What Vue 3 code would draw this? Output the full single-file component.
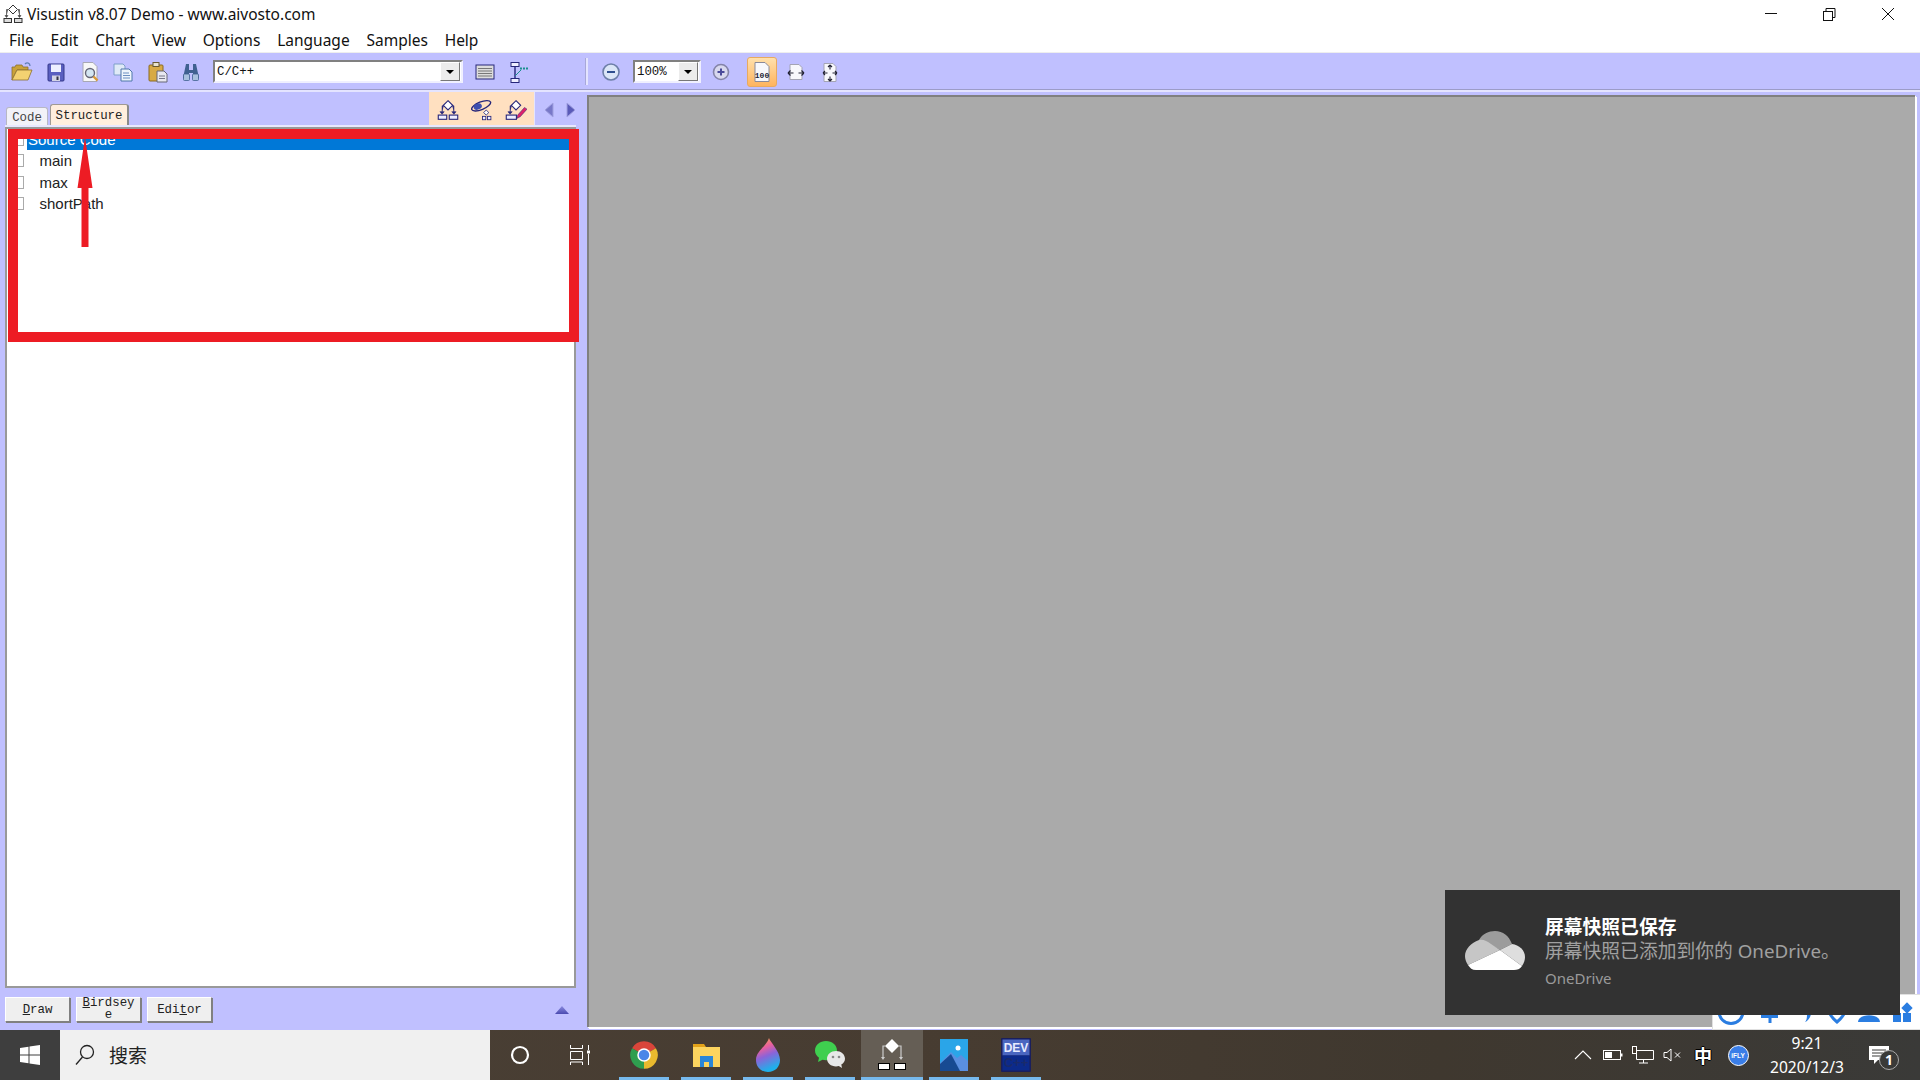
<template>
  <div class="screen">
    <!-- title bar -->
    <div class="titlebar">
      <svg class="app-icon" width="20" height="20" viewBox="0 0 20 20">
        <path d="M10 1l4.500 4.500-4.500 4.500-4.500-4.500z" fill="#fff" stroke="#333" />
        <path d="M5 5.500H3.500v7M15 5.500h1.500v7M2 11.500h3l-1.500 2zM15 11.500h3l-1.500 2z" stroke="#444" fill="#444" stroke-width=".6" />
        <rect x="1" y="14.500" width="7.500" height="4" fill="#ddd" stroke="#333" />
        <rect x="11.500" y="14.500" width="7.500" height="4" fill="#ddd" stroke="#333" />
      </svg>
      <span class="title-text">Visustin v8.07 Demo - www.aivosto.com</span>
      <div class="win-controls">
        <svg width="58" height="27" viewBox="0 0 58 27"><path d="M23 13.500h12" stroke="#111" /></svg>
        <svg width="58" height="27" viewBox="0 0 58 27">
          <rect x="23.500" y="11.500" width="9" height="9" fill="#fff" stroke="#111" />
          <path d="M26 11V8.500h9v9h-2.500" fill="none" stroke="#111" />
        </svg>
        <svg width="60" height="27" viewBox="0 0 60 27"><path d="M24 8l12 12M36 8L24 20" stroke="#111" /></svg>
      </div>
    </div>

    <!-- menu -->
    <div class="menubar">
      <span v-for="m in menus" :key="m" class="menu-item">{{ m }}</span>
    </div>

    <!-- toolbar -->
    <div class="toolbar">
      <span class="tool">
        <svg width="24" height="24" viewBox="0 0 24 24">
          <path d="M2 20V7h3l1-2h6l1 2h5v3H7L2 20z" fill="#c9a23a" stroke="#8a7030" stroke-width=".8" />
          <path d="M2 20l5-10h15l-4 10z" fill="#f3d271" stroke="#8a7030" stroke-width=".8" />
          <path d="M15 4c2-2 5-1 5 2" fill="none" stroke="#5f7fb5" stroke-width="1.300" />
        </svg>
      </span>
      <span class="tool">
        <svg width="24" height="24" viewBox="0 0 24 24">
          <rect x="4" y="4" width="16" height="17" rx="1" fill="#5a5fc0" stroke="#34388a" />
          <rect x="7" y="4.500" width="10" height="7.500" fill="#eef0ff" />
          <rect x="8" y="15.500" width="8" height="5.500" fill="#d4d4e4" />
          <rect x="12.500" y="16.500" width="2" height="3.500" fill="#334" />
        </svg>
      </span>
      <span class="tool">
        <svg width="24" height="24" viewBox="0 0 24 24">
          <path d="M5 2.500h10l4 4v15H5z" fill="#f7f7f7" stroke="#a8a8b4" />
          <circle cx="12" cy="13" r="4.500" fill="#d4e6f2" stroke="#667" stroke-width="1.400" />
          <path d="M15.500 16.500l4 4" stroke="#d99a3a" stroke-width="2.400" />
        </svg>
      </span>
      <span class="tool">
        <svg width="24" height="24" viewBox="0 0 24 24" class="nudge-left">
          <path d="M3 4h9l2 2v9H3z" fill="#dfeaf7" stroke="#7f9fc9" />
          <path d="M10 9h8l3 3v9H10z" fill="#eef5fc" stroke="#4f77aa" />
          <path d="M12 13h6M12 15.500h7M12 18h7" stroke="#6c8fc0" />
        </svg>
      </span>
      <span class="tool">
        <svg width="24" height="24" viewBox="0 0 24 24">
          <rect x="3" y="5" width="14" height="16" rx="1" fill="#d8aa45" stroke="#8a6a20" />
          <rect x="7" y="2.500" width="6" height="4" fill="#e9e4cf" stroke="#6a5a30" />
          <path d="M11 11h7l3 3v8H11z" fill="#e8e8f0" stroke="#667" />
          <path d="M13 16h6M13 18.500h6" stroke="#778" />
        </svg>
      </span>
      <span class="tool">
        <svg width="24" height="24" viewBox="0 0 24 24" class="nudge-left">
          <path d="M7 4h3v6h4V4h3l3 14h-6v-5h-4v5H4z" fill="#3f6090" />
          <rect x="4.500" y="14" width="6" height="6.500" rx="1" fill="#a8c0de" stroke="#3f6090" stroke-width=".8" />
          <rect x="13.500" y="14" width="6" height="6.500" rx="1" fill="#a8c0de" stroke="#3f6090" stroke-width=".8" />
        </svg>
      </span>

      <div class="combo lang-combo">
        <span class="combo-text">C/C++</span>
        <span class="combo-btn"><i class="caret"></i></span>
      </div>

      <span class="tool after-combo">
        <svg width="24" height="24" viewBox="0 0 24 24">
          <rect x="3" y="5" width="18" height="14" fill="#dcdcdc" stroke="#26267a" />
          <path d="M5 8.500h14M5 11h14M5 13.500h14M5 16h14" stroke="#777" />
        </svg>
      </span>
      <span class="tool">
        <svg width="24" height="24" viewBox="0 0 24 24">
          <rect x="4" y="2.500" width="8" height="4" fill="#eef" stroke="#26267a" />
          <rect x="4" y="18.500" width="8" height="4" fill="#eef" stroke="#26267a" />
          <path d="M8 6.500v12" stroke="#26267a" stroke-width="1.400" />
          <path d="M8 16l6-6" stroke="#1a8f8f" />
          <path d="M13 7.500h2v2h-2zM16 7.500h2v2h-2zM19 7.500h2v2h-2z" fill="#1a8f8f" />
        </svg>
      </span>

      <span class="tool-sep"></span>

      <span class="tool zoom-out">
        <svg width="24" height="24" viewBox="0 0 24 24">
          <circle cx="12" cy="12" r="8" fill="#dbe6f7" stroke="#6d7fa8" stroke-width="1.600" />
          <path d="M8 12h8" stroke="#2f4f8f" stroke-width="2" />
        </svg>
      </span>
      <div class="combo zoom-combo">
        <span class="combo-text">100%</span>
        <span class="combo-btn"><i class="caret"></i></span>
      </div>
      <span class="tool zoom-in">
        <svg width="24" height="24" viewBox="0 0 24 24">
          <circle cx="12" cy="12" r="7.500" fill="#d8d8ee" stroke="#8484a8" stroke-width="1.600" />
          <path d="M8.500 12h7M12 8.500v7" stroke="#4a4a9a" stroke-width="2" />
        </svg>
      </span>
      <span class="tool-active">
        <svg width="24" height="24" viewBox="0 0 24 24">
          <path d="M5 2.500h10l4 4v15H5z" fill="#f8f8fc" stroke="#8a8a9a" />
          <text x="12" y="18" text-anchor="middle" class="icon-label">100</text>
        </svg>
      </span>
      <span class="tool fit-width">
        <svg width="24" height="24" viewBox="0 0 24 24">
          <path d="M6 4.500h9l3 3v12H6z" fill="#f8f8fc" stroke="#a4a4b4" />
          <path d="M4 13h5.500M14.500 13H20M4 13l2.500-2.500M4 13l2.500 2.500M20 13l-2.500-2.500M20 13l-2.500 2.500" stroke="#223" stroke-width="1.200" fill="none" />
        </svg>
      </span>
      <span class="tool">
        <svg width="24" height="24" viewBox="0 0 24 24">
          <path d="M6 3.500h9l3 3v15H6z" fill="#f8f8fc" stroke="#a4a4b4" />
          <path d="M5 13h4.500M14.500 13H19M12 5v4.500M12 16.500V21M5 13l2-2M5 13l2 2M19 13l-2-2M19 13l-2 2M12 5l-2 2M12 5l2 2M12 21l-2-2M12 21l2-2" stroke="#223" stroke-width="1.100" fill="none" />
        </svg>
      </span>
    </div>

    <div class="main">
      <!-- left panel -->
      <div class="left">
        <div class="tabs-row">
          <span class="tab">Code</span>
          <span class="tab current">Structure</span>
          <div class="chart-tools">
            <svg width="22" height="22" viewBox="0 0 26 26">
              <path d="M13 2l5.500 5.500L13 13 7.500 7.500z" fill="#fff" stroke="#26267a" stroke-width="1.300" />
              <path d="M8 8H6v8M18 8h2v8M3.500 15h5L6 18zM17.500 15h5L20 18z" fill="#26267a" stroke="#26267a" stroke-width=".7" />
              <rect x="1.500" y="19" width="10" height="5" fill="#eef" stroke="#26267a" stroke-width="1.300" />
              <rect x="14.500" y="19" width="10" height="5" fill="#eef" stroke="#26267a" stroke-width="1.300" />
            </svg>
            <svg width="22" height="22" viewBox="0 0 26 26">
              <ellipse cx="12" cy="8" rx="12" ry="4.500" fill="none" stroke="#26267a" stroke-width="1.600" transform="rotate(-22 12 8)" />
              <ellipse cx="8" cy="9" rx="5" ry="3.500" fill="#3d4fb0" transform="rotate(-22 8 9)" />
              <path d="M18 13l3 3-3 3-3-3z" fill="#fff" stroke="#26267a" />
              <rect x="13.500" y="20.500" width="4" height="4" fill="#eef" stroke="#26267a" />
              <rect x="19.500" y="20.500" width="4" height="4" fill="#eef" stroke="#26267a" />
            </svg>
            <svg width="22" height="22" viewBox="0 0 26 26">
              <path d="M13 2l5.500 5.500L13 13 7.500 7.500z" fill="#fff" stroke="#26267a" stroke-width="1.300" />
              <path d="M8 8H6v8M3.500 15h5L6 18z" fill="#26267a" stroke="#26267a" stroke-width=".7" />
              <rect x="1.500" y="19" width="12" height="5" fill="#eef" stroke="#26267a" stroke-width="1.300" />
              <path d="M15 19l8-9 3 2-8 9-4 2z" fill="#e0206a" stroke="#26267a" stroke-width=".6" />
            </svg>
          </div>
          <div class="nav-arrows">
            <svg width="10" height="16" viewBox="0 0 10 16"><path d="M9 1L1 8l8 7z" fill="#7878c8" stroke="#a0a0e0" /></svg>
            <svg width="10" height="16" viewBox="0 0 10 16"><path d="M1 1l8 7-8 7z" fill="#5a5ab8" stroke="#a0a0e0" /></svg>
          </div>
        </div>

        <div class="tree">
          <div v-for="row in rows" :key="row.name" class="tree-row">
            <span class="check"></span>
            <span class="tree-label" :class="{ selected: row.selected, child: !row.selected }">{{ row.name }}</span>
          </div>
        </div>

        <div class="bottom-row">
          <button class="mono-btn"><u>D</u>raw</button>
          <button class="mono-btn wrap"><u>B</u>irdseye</button>
          <button class="mono-btn">Edi<u>t</u>or</button>
          <svg class="collapse" width="14" height="8" viewBox="0 0 14 8">
            <defs>
              <linearGradient id="tri" x1="0" y1="0" x2="0" y2="1">
                <stop offset="0" stop-color="#8c8ce0" />
                <stop offset="1" stop-color="#4a4ab0" />
              </linearGradient>
            </defs>
            <path d="M7 0l7 8H0z" fill="url(#tri)" />
          </svg>
        </div>
      </div>

      <!-- chart area -->
      <div class="canvas-wrap">
        <div class="canvas"></div>
      </div>
    </div>

    <!-- taskbar -->
    <div class="taskbar">
      <div class="start">
        <svg width="20" height="20" viewBox="0 0 20 20">
          <path d="M0 3l8.500-1.200v7.700H0zM9.500 1.600L20 0v9.500H9.500zM0 10.500h8.500v7.700L0 17zM9.500 10.500H20V20L9.500 18.400z" fill="#fff" />
        </svg>
      </div>
      <div class="search">
        <svg width="22" height="24" viewBox="0 0 22 24">
          <circle cx="13" cy="9" r="6.500" fill="none" stroke="#222" stroke-width="1.300" />
          <path d="M8.500 14L2 21.500" stroke="#222" stroke-width="1.300" />
        </svg>
        <span class="search-text">搜索</span>
      </div>
      <div class="task-btn cortana">
        <svg width="20" height="20" viewBox="0 0 20 20"><circle cx="10" cy="10" r="8" fill="none" stroke="#fff" stroke-width="2.200" /></svg>
      </div>
      <div class="task-btn view">
        <svg width="22" height="22" viewBox="0 0 22 22">
          <path d="M1.500 1v3.500h12V1M1.500 7.500h12v8h-12zM1.500 21v-3h12v3M19.500 1v5M19.500 10v11" fill="none" stroke="#fff" />
          <rect x="18" y="6.500" width="3" height="3" fill="#fff" />
        </svg>
      </div>

      <div v-for="app in apps" :key="app" class="app-slot" :class="{ active: app === 'visustin' }">
        <svg v-if="app === 'chrome'" width="30" height="32" viewBox="0 0 24 24">
          <path d="M12 12L2.470 6.500A11 11 0 0 1 21.530 6.500z" fill="#d9453a" />
          <path d="M12 12l9.530-5.500A11 11 0 0 1 12 23z" fill="#e9b92e" />
          <path d="M12 12v11A11 11 0 0 1 2.470 6.500z" fill="#2f9e4f" />
          <circle cx="12" cy="12" r="5.400" fill="#fff" />
          <circle cx="12" cy="12" r="4.200" fill="#4a86e8" />
        </svg>
        <svg v-else-if="app === 'folder'" width="30" height="30" viewBox="0 0 30 30">
          <path d="M2 4h11l2 3H2z" fill="#e2a21a" />
          <rect x="2" y="7" width="27" height="20" fill="#fcd45f" />
          <path d="M9 27v-11h13v11h-4v-5h-5v5z" fill="#2a86d8" />
        </svg>
        <svg v-else-if="app === 'flame'" width="26" height="36" viewBox="0 0 26 36">
          <defs>
            <linearGradient id="flame" x1="0" y1="0" x2="0.300" y2="1">
              <stop offset="0" stop-color="#f5b63c" />
              <stop offset=".35" stop-color="#e85f9e" />
              <stop offset=".6" stop-color="#8b63d8" />
              <stop offset="1" stop-color="#1fb0ea" />
            </linearGradient>
          </defs>
          <path d="M14 1c1 4 11 13 11 22 0 7-5 12-12 12S1 30 1 23C1 14 11 10 14 1z" fill="url(#flame)" />
        </svg>
        <svg v-else-if="app === 'wechat'" width="32" height="30" viewBox="0 0 32 30">
          <path d="M12 1C6 1 1 5 1 10.500c0 3 1.500 5.500 4 7.300L4 22l4.500-2.300c1 .3 2.300.5 3.500.5 6 0 11-4.200 11-9.700S18 1 12 1z" fill="#3fcf4f" />
          <path d="M22 11c-5 0-9 3.400-9 7.700s4 7.700 9 7.700c1 0 2-.1 2.800-.4L28 28l-.7-3.400c2.300-1.400 3.700-3.500 3.700-5.900 0-4.300-4-7.700-9-7.700z" fill="#e8e8e8" />
          <circle cx="19" cy="17" r="1.300" fill="#888" />
          <circle cx="25" cy="17" r="1.300" fill="#888" />
        </svg>
        <svg v-else-if="app === 'visustin'" width="30" height="34" viewBox="0 0 30 34">
          <path d="M15 1l7 7-7 7-7-7z" fill="#fff" />
          <path d="M8 8H6v11M22 8h2v11" stroke="#ccc" stroke-width="1.200" fill="none" />
          <path d="M4 19h4l-2 3zM22 19h4l-2 3z" fill="#ccc" />
          <rect x="1.500" y="25.500" width="11" height="6" fill="#fff" stroke="#000" />
          <rect x="17.500" y="25.500" width="11" height="6" fill="#fff" stroke="#000" />
        </svg>
        <svg v-else-if="app === 'photos'" width="28" height="32" viewBox="0 0 28 32">
          <rect width="28" height="32" fill="#2aa5e8" />
          <circle cx="18" cy="9" r="2.500" fill="#fff" />
          <path d="M0 24l11-11 6 6 4-3 7 6v12H0z" fill="#5a8fe0" />
          <path d="M0 25l11-10 9 17H0z" fill="#174a92" />
        </svg>
        <svg v-else-if="app === 'dev'" width="30" height="34" viewBox="0 0 30 34">
          <rect width="30" height="34" rx="1" fill="#1a1f5c" />
          <rect x="1.500" y="1.500" width="27" height="16" fill="#4a66c0" />
          <rect x="1.500" y="17.500" width="27" height="15" fill="#0c2a8a" />
          <text x="15" y="14" text-anchor="middle" class="dev-top">DEV</text>
          <text x="15" y="29" text-anchor="middle" class="dev-bottom">C++</text>
        </svg>
        <span class="underline"></span>
      </div>

      <div class="tray">
        <span class="tray-slot">
          <svg width="18" height="12" viewBox="0 0 18 12"><path d="M1 10l8-8 8 8" fill="none" stroke="#fff" stroke-width="1.100" /></svg>
        </span>
        <span class="tray-slot">
          <svg width="20" height="12" viewBox="0 0 20 12">
            <rect x=".5" y="1.500" width="17" height="9" fill="none" stroke="#fff" />
            <rect x="2" y="3" width="7" height="6" fill="#fff" />
            <rect x="18" y="4.500" width="1.500" height="3" fill="#fff" />
          </svg>
        </span>
        <span class="tray-slot">
          <svg width="22" height="18" viewBox="0 0 22 18">
            <path d="M4.500 4.500h17v9h-17zM7 17h9M11.500 13.500V17" fill="none" stroke="#fff" />
            <rect x=".5" y=".5" width="4" height="7" fill="#3f352b" stroke="#fff" />
          </svg>
        </span>
        <span class="tray-slot">
          <svg width="20" height="14" viewBox="0 0 20 14">
            <path d="M1 4.500h3L8 1v12L4 9.500H1z" fill="none" stroke="#fff" />
            <path d="M12 4.500l5 5M17 4.500l-5 5" stroke="#fff" />
          </svg>
        </span>
        <span class="tray-slot ime">中</span>
        <span class="tray-slot wide">
          <span class="ifly">iFLY</span>
        </span>
        <div class="clock">
          <span>9:21</span>
          <span>2020/12/3</span>
        </div>
        <span class="notify">
          <svg width="20" height="19" viewBox="0 0 20 19">
            <path d="M0 0h20v14H9l-4 4v-4H0z" fill="#fff" />
            <path d="M3 4h14M3 7h14M3 10h9" stroke="#3a3a38" />
          </svg>
          <span class="notify-badge">1</span>
        </span>
      </div>
    </div>

    <!-- red annotation drawn over the tree -->
    <div class="mark-box"></div>
    <svg class="mark-arrow" width="16" height="110" viewBox="0 0 16 110">
      <path d="M8 0L15.500 51H11.500V110H4.500V51H.5z" fill="#ed1c24" />
    </svg>

    <!-- floating input bar behind the toast -->
    <div class="input-bar">
      <svg width="207" height="34" viewBox="0 0 207 34">
        <circle cx="18" cy="16.500" r="12" fill="none" stroke="#2a7de1" stroke-width="3" />
        <path d="M57 5v23M48 21.500h17" stroke="#2a7de1" stroke-width="3" />
        <path d="M98 18c0 4-3 8-6 9 2-2 2-5 2-9z" fill="#2a7de1" />
        <path d="M116 17c2 5 8 10 8 10s6-5 8-10" fill="none" stroke="#2a7de1" stroke-width="3" />
        <path d="M145 27c0-9 22-9 22 0z" fill="#2a7de1" />
        <rect x="180" y="18" width="8" height="9" fill="#2a7de1" />
        <rect x="190" y="18" width="8" height="9" fill="#2a7de1" />
        <rect x="190" y="9" width="8" height="8" fill="#2a7de1" transform="rotate(45 194 13)" />
      </svg>
    </div>

    <!-- toast -->
    <div class="toast">
      <svg class="cloud" width="60" height="39" viewBox="0 0 60 39">
        <path d="M14 9C17 3 24 0 30 0c8 0 14 5 17 13L35 19 24 13c-4-2-7-3-10-4z" fill="#9c9c9c" />
        <path d="M14 9c4-1 8 1 12 4l9 6L3 34c-2-3-3-6-3-9C0 18 6 12 14 9z" fill="#c6c6c6" />
        <path d="M47 13c7 1 13 6 13 13 0 3-1 6-3 9L35 19z" fill="#dedede" />
        <path d="M3 34l32-15 22 16c-2 3-5 4-8 4H11c-4 0-6-2-8-5z" fill="#fff" />
      </svg>
      <div class="toast-text">
        <div class="toast-title">屏幕快照已保存</div>
        <div class="toast-body">屏幕快照已添加到你的 OneDrive。</div>
        <div class="toast-source">OneDrive</div>
      </div>
    </div>
  </div>
</template>

<script setup>
const menus = ['File', 'Edit', 'Chart', 'View', 'Options', 'Language', 'Samples', 'Help']

const rows = [
  { name: 'Source Code', selected: true },
  { name: 'main' },
  { name: 'max' },
  { name: 'shortPath' },
]

const apps = ['chrome', 'folder', 'flame', 'wechat', 'visustin', 'photos', 'dev']
</script>

<style>
html,
body {
  margin: 0;
  background: #fff;
}
</style>

<style scoped>
.screen {
  position: relative;
  display: flex;
  flex-direction: column;
  width: 1920px;
  height: 1080px;
  overflow: hidden;
  background: #fff;
  color: #111;
  font-family: "Noto Sans", "Noto Sans CJK SC", sans-serif;
}

.titlebar {
  display: flex;
  align-items: center;
  height: 27px;
  padding-left: 3px;
  font-size: 15.500px;
}
.title-text {
  margin-left: 4px;
}
.win-controls {
  display: flex;
  margin-left: auto;
  padding-right: 2px;
}

.menubar {
  display: flex;
  align-items: center;
  height: 26px;
  padding-left: 1.500px;
  border-bottom: 1px solid #eee;
  box-sizing: border-box;
  font-size: 15.500px;
}
.menu-item {
  padding: 0 9.300px 0 7.500px;
}

.toolbar {
  display: flex;
  align-items: center;
  height: 39px;
  padding-left: 5px;
  box-sizing: border-box;
  background: #c0c0ff;
  border-bottom: 2px solid #e4e4ff;
  box-shadow: inset 0 -1px 0 #9c9cc8;
}
.tool {
  display: flex;
  justify-content: center;
  width: 34px;
  flex: none;
}
.nudge-left {
  margin-left: -2px;
}
.combo {
  display: flex;
  align-items: center;
  height: 23px;
  box-sizing: border-box;
  background: #fff;
  border: 2px solid;
  border-color: #808080 #f0f0ff #f0f0ff #808080;
  font-family: "Liberation Mono", monospace;
  font-size: 12.400px;
  flex: none;
}
.lang-combo {
  width: 250px;
  margin-left: 4px;
}
.zoom-combo {
  width: 68px;
  margin-left: 5px;
}
.combo-text {
  flex: 1;
  padding-left: 2px;
}
.combo-btn {
  display: flex;
  align-items: center;
  justify-content: center;
  width: 20px;
  height: 19px;
  margin-right: 1px;
  box-sizing: border-box;
  background: #ececec;
  border: 1px solid;
  border-color: #fff #777 #777 #fff;
}
.caret {
  width: 0;
  height: 0;
  border: 4px solid transparent;
  border-top: 4px solid #000;
  border-bottom: 0;
}
.after-combo {
  margin-left: 5px;
}
.tool-sep {
  width: 2px;
  height: 27px;
  margin-left: 50px;
  background: #e4e4ff;
  box-shadow: -1px 0 0 #a8a8d8;
  flex: none;
}
.zoom-out {
  margin-left: 6px;
}
.zoom-in {
  width: 40px;
}
.tool-active {
  display: flex;
  align-items: center;
  justify-content: center;
  width: 30px;
  height: 30px;
  margin-left: 6px;
  box-sizing: border-box;
  background: linear-gradient(#ffe0ac, #ffb45e);
  border: 1px solid #e8aa60;
  border-radius: 3px;
  flex: none;
}
.icon-label {
  font-family: "Liberation Mono", monospace;
  font-size: 8px;
  font-weight: 700;
  fill: #223;
}
.fit-width {
  margin-left: 2px;
}

.main {
  display: flex;
  flex: 1;
  min-height: 0;
  background: #c0c0ff;
}
.left {
  display: flex;
  flex-direction: column;
  width: 587px;
  flex: none;
}
.tabs-row {
  display: flex;
  align-items: flex-end;
  height: 35px;
  padding: 0 0 2px 6px;
  box-sizing: border-box;
  flex: none;
}
.tab {
  height: 18px;
  width: 42px;
  margin-right: 2px;
  box-sizing: border-box;
  padding-top: 3px;
  background: #f2f2f8;
  border: 1px solid #b8b8c4;
  border-bottom: 0;
  border-radius: 3px 3px 0 0;
  font-family: "Liberation Mono", monospace;
  font-size: 12.400px;
  line-height: 15px;
  text-align: center;
  color: #444;
}
.tab.current {
  width: 79px;
  height: 21px;
  padding-top: 4px;
  background: #ffeedd;
  border-color: #a09a94;
  border-right: 2px solid #8a8a8a;
  color: #222;
}
.chart-tools {
  display: flex;
  align-items: center;
  gap: 12px;
  align-self: flex-start;
  width: 106px;
  height: 35px;
  margin-left: auto;
  padding-left: 8px;
  box-sizing: border-box;
  background: #ffe0c0;
  border-right: 1px solid #e4e4ff;
}
.nav-arrows {
  display: flex;
  align-items: center;
  justify-content: space-between;
  align-self: center;
  width: 32px;
  margin: 2px 11px 0 9px;
}

.tree {
  flex: 1;
  margin: 0 11px 0 5px;
  background: #fff;
  border: 2px solid #999;
  box-shadow: 0 -2px 0 #e8e8ff;
  font-family: "Liberation Sans", sans-serif;
  font-size: 15px;
  color: #222;
}
.tree-row {
  display: flex;
  align-items: center;
  height: 21.300px;
}
.check {
  width: 9px;
  height: 13px;
  margin-left: 8px;
  box-sizing: border-box;
  border: 1px solid #aaa;
  flex: none;
}
.tree-label {
  flex: 1;
  margin-left: 3px;
  padding-left: 1px;
  line-height: 21.300px;
}
.tree-label.child {
  padding-left: 12.500px;
}
.tree-label.selected {
  background: #0078d7;
  color: #fff;
}

.bottom-row {
  display: flex;
  align-items: flex-start;
  gap: 6px;
  height: 42px;
  padding: 9px 0 0 5px;
  box-sizing: border-box;
  flex: none;
}
.mono-btn {
  width: 65px;
  height: 25px;
  padding: 2px 0 0;
  box-sizing: border-box;
  background: #efefef;
  border: 1px solid;
  border-color: #fff #808080 #808080 #fff;
  box-shadow: 1px 1px 0 #808080;
  font-family: "Liberation Mono", monospace;
  font-size: 12.400px;
  line-height: 13px;
  color: #222;
}
.mono-btn.wrap {
  word-break: break-all;
  padding: 0 2px;
  line-height: 11.500px;
}
.collapse {
  margin: 9px 18px 0 auto;
}

.canvas-wrap {
  display: flex;
  flex: 1;
  padding: 3px 5px 3px 0;
  box-sizing: border-box;
}
.canvas {
  flex: 1;
  background: #aaa;
  border-top: 2px solid #808080;
  border-left: 2px solid #808080;
  box-shadow: 1px 1px 0 #fff, 2px 2px 0 #fff;
}

.taskbar {
  display: flex;
  align-items: stretch;
  height: 50px;
  flex: none;
  background: linear-gradient(90deg, #4a4036 0%, #473c31 50%, #3f382f 75%, #3a3a38 100%);
  color: #fff;
}
.start {
  display: flex;
  align-items: center;
  justify-content: center;
  width: 60px;
  background: #3e3e3e;
}
.search {
  display: flex;
  align-items: center;
  gap: 13px;
  width: 430px;
  padding-left: 14px;
  box-sizing: border-box;
  background: #f0f0f0;
  color: #222;
  font-size: 19px;
}
.task-btn {
  display: flex;
  align-items: center;
  justify-content: center;
}
.cortana {
  width: 60px;
}
.view {
  width: 59px;
  margin-right: 4px;
}
.app-slot {
  position: relative;
  display: flex;
  align-items: center;
  justify-content: center;
  width: 62px;
}
.app-slot.active {
  background: #655e55;
}
.underline {
  position: absolute;
  left: 6px;
  right: 6px;
  bottom: 0;
  height: 3px;
  background: #76b9ed;
}
.app-slot.active .underline {
  left: 0;
  right: 0;
}
.dev-top {
  font-family: "Liberation Sans", sans-serif;
  font-size: 12px;
  font-weight: 700;
  fill: #e8ecff;
}
.dev-bottom {
  font-family: "Liberation Sans", sans-serif;
  font-size: 13px;
  font-weight: 700;
  fill: #1a2a6a;
}
.tray {
  display: flex;
  align-items: center;
  margin-left: auto;
  padding-right: 18px;
}
.tray-slot {
  display: flex;
  align-items: center;
  justify-content: center;
  width: 30px;
}
.tray-slot.wide {
  width: 40px;
}
.ime {
  font-size: 18px;
  font-weight: 700;
  text-shadow: 1px 0 0 #000, -1px 0 0 #000, 0 1px 0 #000, 0 -1px 0 #000;
}
.ifly {
  display: flex;
  align-items: center;
  justify-content: center;
  width: 21px;
  height: 21px;
  border-radius: 50%;
  background: #3a7ee8;
  border: 1px solid #fff;
  box-sizing: border-box;
  font-family: "Liberation Sans", sans-serif;
  font-size: 6.500px;
  font-weight: 700;
}
.clock {
  display: flex;
  flex-direction: column;
  align-items: center;
  gap: 5px;
  width: 98px;
  font-size: 15.600px;
  line-height: 19px;
}
.notify {
  position: relative;
  display: flex;
  justify-content: flex-start;
  width: 46px;
  padding-left: 13px;
  box-sizing: border-box;
}
.notify-badge {
  position: absolute;
  left: 23px;
  top: 4px;
  display: flex;
  align-items: center;
  justify-content: center;
  width: 20px;
  height: 20px;
  box-sizing: border-box;
  background: #3a3a38;
  border: 1px solid #aaa;
  border-radius: 50%;
  font-size: 14px;
  font-weight: 700;
}

.mark-box {
  position: absolute;
  left: 8px;
  top: 129px;
  width: 571px;
  height: 213px;
  box-sizing: border-box;
  border: 10px solid #ed1c24;
}
.mark-arrow {
  position: absolute;
  left: 76.500px;
  top: 137px;
}

.input-bar {
  position: absolute;
  left: 1713px;
  top: 995px;
  width: 207px;
  height: 34px;
  background: #fff;
  box-shadow: 0 0 0 1px #e0e0e0;
}
.input-bar svg {
  display: block;
}

.toast {
  position: absolute;
  left: 1445px;
  top: 890px;
  display: flex;
  width: 455px;
  height: 125px;
  background: #323232;
}
.cloud {
  margin: 41px 0 0 20px;
  flex: none;
}
.toast-text {
  margin-left: 20px;
  padding-top: 25px;
}
.toast-title {
  color: #fff;
  font-size: 18.800px;
  font-weight: 700;
  line-height: 25px;
}
.toast-body {
  margin-top: -1px;
  color: #a0a0a0;
  font-size: 18.800px;
  line-height: 24px;
}
.toast-source {
  margin-top: 1px;
  color: #9a9a9a;
  font-size: 15px;
  line-height: 28px;
}
</style>
